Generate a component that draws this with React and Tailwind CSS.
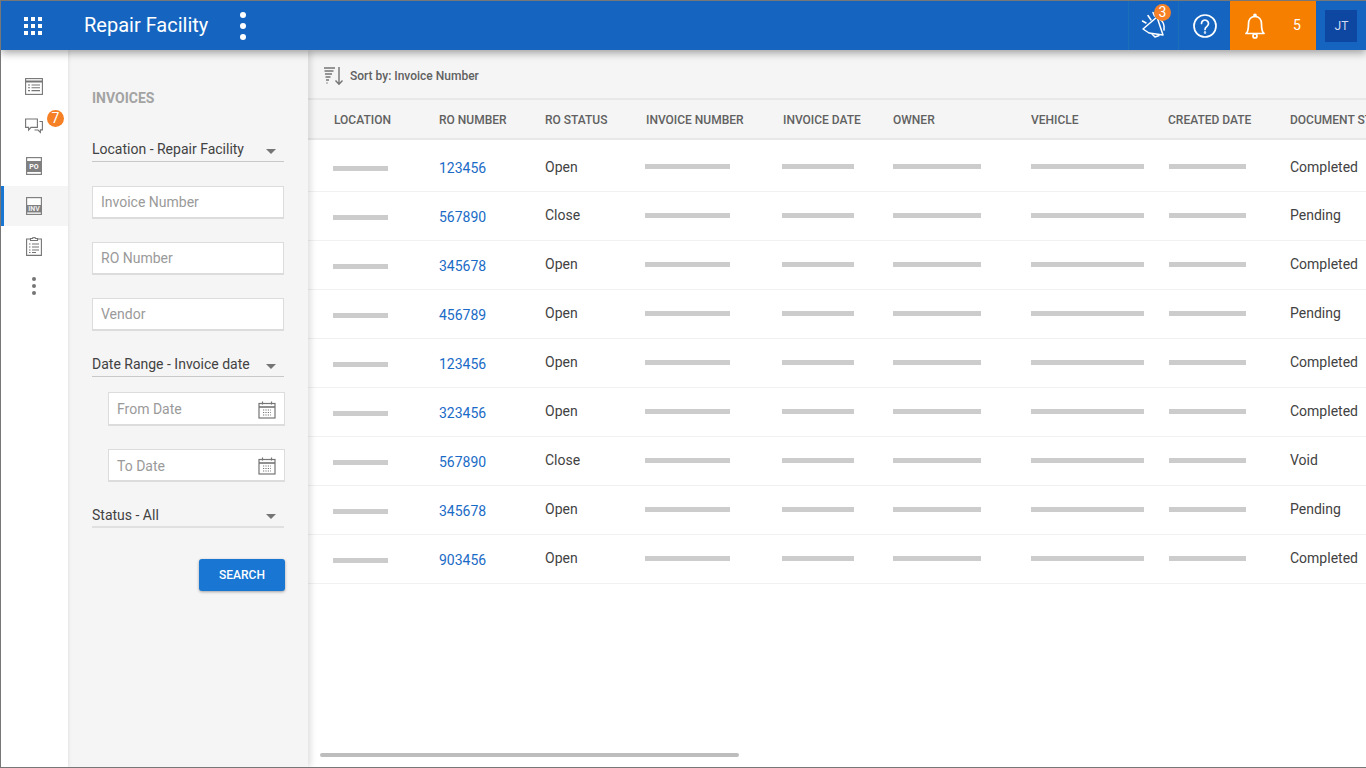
import React from 'react';

const rows = [
  { ro: '123456', status: 'Open', doc: 'Completed' },
  { ro: '567890', status: 'Close', doc: 'Pending' },
  { ro: '345678', status: 'Open', doc: 'Completed' },
  { ro: '456789', status: 'Open', doc: 'Pending' },
  { ro: '123456', status: 'Open', doc: 'Completed' },
  { ro: '323456', status: 'Open', doc: 'Completed' },
  { ro: '567890', status: 'Close', doc: 'Void' },
  { ro: '345678', status: 'Open', doc: 'Pending' },
  { ro: '903456', status: 'Open', doc: 'Completed' },
];

const columns = 'grid grid-cols-[26px_105px_106px_101px_137px_110px_138px_137px_122px_200px] w-[1180px]';

function Caret() {
  return <span className="ml-auto mr-[8px] mt-[3px] w-0 h-0 border-x-[5px] border-x-transparent border-t-[5px] border-t-[#757575]" />;
}

function SelectField({ label, className }) {
  return (
    <div className={`flex items-center w-[192px] h-[24px] border-b text-[14px] text-[#424242] ${className}`}>
      <span>{label}</span>
      <Caret />
    </div>
  );
}

function TextField({ label }) {
  return (
    <div className="flex items-center w-[192px] h-[33px] bg-white border border-[#dcdcdc] border-b-2 pl-[8px] text-[14px] text-[#9a9a9a]">
      {label}
    </div>
  );
}

function CalendarIcon() {
  return (
    <svg width="18" height="18" viewBox="0 0 18 18" fill="none" stroke="#757575">
      <rect x="1" y="2.5" width="16" height="14.5" strokeWidth="1.2" />
      <path d="M1 6h16" strokeWidth="1.6" />
      <path d="M4.5 0.5v3M13.5 0.5v3" strokeWidth="1.2" />
      <path d="M5 9h8M5 11.5h8M5 14h8" strokeWidth="1.2" strokeDasharray="1.2 1.2" />
    </svg>
  );
}

function DateField({ label, className }) {
  return (
    <div className={`flex items-center justify-between ml-[16px] w-[177px] bg-white border border-[#dcdcdc] border-b-2 pl-[8px] pr-[8px] pt-[2px] text-[14px] text-[#9a9a9a] ${className}`}>
      <span>{label}</span>
      <CalendarIcon />
    </div>
  );
}

function Bar({ w, shift }) {
  return <div className={`h-[5px] bg-[#cccccc] ${w} ${shift}`} />;
}

function AppsIcon() {
  return (
    <svg width="20" height="20" viewBox="0 0 20 20" fill="#fff">
      {[1, 8, 15].map(y => [1, 8, 15].map(x => <rect key={`${x}-${y}`} x={x} y={y} width="4" height="4" />))}
    </svg>
  );
}

function NavIcon({ children, active }) {
  return (
    <div className={`relative flex items-center justify-center h-[40px] pr-[1px] ${active ? 'bg-[#f5f5f5]' : ''}`}>
      {active && <div className="absolute left-0 top-0 bottom-0 w-[3px] bg-[#1976d2]" />}
      {children}
    </div>
  );
}

function PoIcon() {
  return (
    <svg width="16" height="18" viewBox="0 0 16 18">
      <rect x="0.6" y="0.6" width="14.8" height="16.8" fill="#fff" stroke="#808080" strokeWidth="1.2" />
      <rect x="1" y="4" width="14" height="11" fill="#808080" />
      <text x="8" y="12" textAnchor="middle" fontSize="7" fontWeight="700" fontFamily="Roboto, sans-serif" fill="#fff">PO</text>
    </svg>
  );
}

function InvIcon() {
  return (
    <svg width="16" height="18" viewBox="0 0 16 18">
      <rect x="0.6" y="0.6" width="14.8" height="16.8" fill="#fff" stroke="#808080" strokeWidth="1.2" />
      <rect x="1" y="8" width="14" height="7.5" fill="#808080" />
      <text x="8" y="14.4" textAnchor="middle" fontSize="7" fontWeight="700" fontFamily="Roboto, sans-serif" fill="#eeeeee">INV</text>
    </svg>
  );
}

export default function App() {
  return (
    <div className="w-[1366px] h-[768px] overflow-hidden flex flex-col bg-white border-l border-t border-b border-[#777777]" style={{ fontFamily: 'Roboto, sans-serif' }}>
      <header className="relative z-20 shrink-0 flex items-center h-[49px] bg-[#1565c0] text-white shadow-[0_3px_8px_rgba(0,0,0,0.35)]">
        <div className="ml-[22px]"><AppsIcon /></div>
        <div className="ml-[41px] pb-[2px] text-[20px]">Repair Facility</div>
        <div className="ml-[32px] flex flex-col gap-[5px]">
          <span className="w-[6px] h-[6px] rounded-full bg-white" />
          <span className="w-[6px] h-[6px] rounded-full bg-white" />
          <span className="w-[6px] h-[6px] rounded-full bg-white" />
        </div>
        <div className="ml-auto flex h-full">
          <div className="relative flex items-center justify-center w-[51px] border-x border-[#1a70b8]">
            <svg className="ml-[3px] mb-[3px]" width="28" height="28" viewBox="0 0 28 28" fill="none" stroke="#fff" strokeWidth="1.5" strokeLinejoin="round" strokeLinecap="round">
              <path d="M2 19 L16 7 L22 25 L8 23 Z" />
              <path d="M11 24 L14 27 L18 25.5" />
              <path d="M18 9 C21.5 10 24 15 23 20" />
              <path d="M1.5 11 L5 13M7 5.5 L10 10M12 2.5 L13.5 6" />
            </svg>
            <span className="absolute top-[3px] left-[25px] flex items-center justify-center w-[17px] h-[17px] rounded-full bg-[#f58025] text-[14px]">3</span>
          </div>
          <div className="flex items-center justify-center w-[51px]">
            <svg width="24" height="24" viewBox="0 0 24 24" fill="none" stroke="#fff" strokeWidth="1.7" strokeLinecap="round">
              <circle cx="12" cy="12" r="11" />
              <path d="M8.5 9.5a3.5 3.5 0 1 1 5.5 2.9c-1.3.9-2 1.6-2 3" />
              <circle cx="12" cy="18.5" r="0.4" />
            </svg>
          </div>
          <div className="flex items-center w-[86px] bg-[#f77f00]">
            <svg className="ml-[14px]" width="22" height="26" viewBox="0 0 22 26" fill="none" stroke="#fff" strokeWidth="1.7" strokeLinejoin="round">
              <path d="M2 20.5 C4 19 4.5 17 4.5 11 C4.5 6.5 7 3.5 11 3.5 C15 3.5 17.5 6.5 17.5 11 C17.5 17 18 19 20 20.5 Z" />
              <circle cx="11" cy="2.3" r="1" />
              <circle cx="11" cy="23" r="2" />
            </svg>
            <span className="ml-[27px] text-[14px]">5</span>
          </div>
          <div className="flex items-center justify-center w-[50px]">
            <div className="flex items-center justify-center w-[32px] h-[32px] pl-[1px] bg-[#0d47a1] text-[12px] text-[#d5def0]">JT</div>
          </div>
        </div>
      </header>

      <div className="flex flex-1 min-h-0">
        <nav className="relative z-10 shrink-0 w-[67px] bg-white pt-[16px] shadow-[1px_0_3px_rgba(0,0,0,0.08)]">
          <NavIcon>
            <svg width="18" height="17" viewBox="0 0 18 17" fill="none" stroke="#757575" strokeWidth="1.1">
              <rect x="0.6" y="0.6" width="16.8" height="15.8" />
              <path d="M1 3.5h16" strokeWidth="2" />
              <path d="M3 7h2M6.5 7h8.5M3 9.8h2M6.5 9.8h8.5M3 12.6h2M6.5 12.6h8.5" />
            </svg>
          </NavIcon>
          <NavIcon>
            <svg width="18" height="17" viewBox="0 0 18 17" fill="none" stroke="#757575" strokeWidth="1.1">
              <path d="M0.6 1h11.8v8.4H6L3.6 12V9.4H0.6Z" />
              <path d="M14.5 3.5h2.9v8.4h-2v2.6L13 12H9.5" />
            </svg>
            <span className="absolute top-[4px] left-[46px] flex items-center justify-center w-[17px] h-[17px] rounded-full bg-[#f58025] text-[14px] text-white">7</span>
          </NavIcon>
          <NavIcon><PoIcon /></NavIcon>
          <NavIcon active={true}><InvIcon /></NavIcon>
          <NavIcon>
            <svg width="16" height="19" viewBox="0 0 16 19" fill="none" stroke="#757575" strokeWidth="1.1">
              <path d="M4.5 2H0.6v16.4h14.8V2h-3.9" />
              <path d="M4.5 3.5V1.5h2.2a1.3 1.3 0 0 1 2.6 0h2.2v2Z" />
              <path d="M3 7h1.5M6 7h7M3 10h1.5M6 10h7M3 13h1.5M6 13h7M3 15.5h1.5M6 15.5h4" />
            </svg>
          </NavIcon>
          <NavIcon>
            <div className="flex flex-col gap-[3px]">
              <span className="w-[4px] h-[4px] rounded-full bg-[#757575]" />
              <span className="w-[4px] h-[4px] rounded-full bg-[#757575]" />
              <span className="w-[4px] h-[4px] rounded-full bg-[#757575]" />
            </div>
          </NavIcon>
        </nav>

        <aside className="relative z-[5] shrink-0 w-[240px] bg-[#f5f5f5] pl-[24px] pt-[40px] shadow-[3px_0_6px_rgba(0,0,0,0.12)]">
          <div className="text-[14px] font-bold leading-[16px] text-[#a3a3a3]">INVOICES</div>
          <SelectField label="Location - Repair Facility" className="mt-[32px] border-[#c8c8c8]" />
          <div className="mt-[24px]"><TextField label="Invoice Number" /></div>
          <div className="mt-[23px]"><TextField label="RO Number" /></div>
          <div className="mt-[23px]"><TextField label="Vendor" /></div>
          <SelectField label="Date Range - Invoice date" className="mt-[22px] border-[#c8c8c8]" />
          <DateField label="From Date" className="mt-[15px] h-[34px]" />
          <DateField label="To Date" className="mt-[23px] h-[33px]" />
          <SelectField label="Status - All" className="mt-[22px] border-b-2 border-[#e0e0e0]" />
          <div className="flex justify-end w-[193px] mt-[31px]">
            <button className="w-[86px] h-[32px] rounded-[3px] bg-[#1976d2] text-[12px] font-medium text-white shadow-[0_1px_3px_rgba(0,0,0,0.35)]">SEARCH</button>
          </div>
        </aside>

        <main className="relative flex-1 min-w-0 overflow-hidden bg-white">
          <div className="flex items-center h-[48px] bg-[#f5f5f5] pl-[15px] pt-[4px]">
            <svg width="22" height="20" viewBox="0 0 22 20" fill="none" stroke="#757575">
              <path d="M1 2h11M1.5 5h9M2 8h7M2.5 11h5M3 14h3M3.5 17h1" strokeWidth="1.3" />
              <path d="M16 1v17M12.5 14.5l3.5 3.8 3.5-3.8" strokeWidth="1.4" />
            </svg>
            <span className="ml-[5px] text-[12px] font-medium text-[#616161]">Sort by: Invoice Number</span>
          </div>
          <div className={`${columns} items-center h-[42px] pt-[2px] bg-[#f5f5f5] border-y-2 border-[#e8e8e8] text-[12px] font-medium text-[#616161]`}>
            <span />
            <span>LOCATION</span>
            <span>RO NUMBER</span>
            <span>RO STATUS</span>
            <span>INVOICE NUMBER</span>
            <span>INVOICE DATE</span>
            <span>OWNER</span>
            <span>VEHICLE</span>
            <span>CREATED DATE</span>
            <span className="whitespace-nowrap">DOCUMENT STATUS</span>
          </div>
          {rows.map((r, i) => {
            const first = i === 0;
            const barShift = first ? 'mt-[1px]' : '-mt-[1px]';
            const textShift = first ? 'mt-[3px]' : '-mt-[1px]';
            return (
              <div key={i} className={`${columns} items-center ${first ? 'h-[52px]' : 'h-[49px]'} border-b border-[#f1f1f1] text-[14px] text-[#424242]`}>
                <span />
                <Bar w="w-[55px]" shift={`-ml-[1px] ${first ? 'mt-[6px]' : 'mt-[3px]'}`} />
                <a className={`text-[#1a6bc6] ${first ? 'mt-[6px]' : 'mt-[2px]'}`}>{r.ro}</a>
                <span className={textShift}>{r.status}</span>
                <Bar w="w-[85px]" shift={`-ml-[1px] ${barShift}`} />
                <Bar w="w-[72px]" shift={`-ml-[1px] ${barShift}`} />
                <Bar w="w-[88px]" shift={barShift} />
                <Bar w="w-[113px]" shift={barShift} />
                <Bar w="w-[77px]" shift={`ml-[1px] ${barShift}`} />
                <span className={textShift}>{r.doc}</span>
              </div>
            );
          })}
          <div className="absolute left-[12px] bottom-[10px] w-[419px] h-[4px] rounded-full bg-[#bdbdbd]" />
        </main>
      </div>
    </div>
  );
}
